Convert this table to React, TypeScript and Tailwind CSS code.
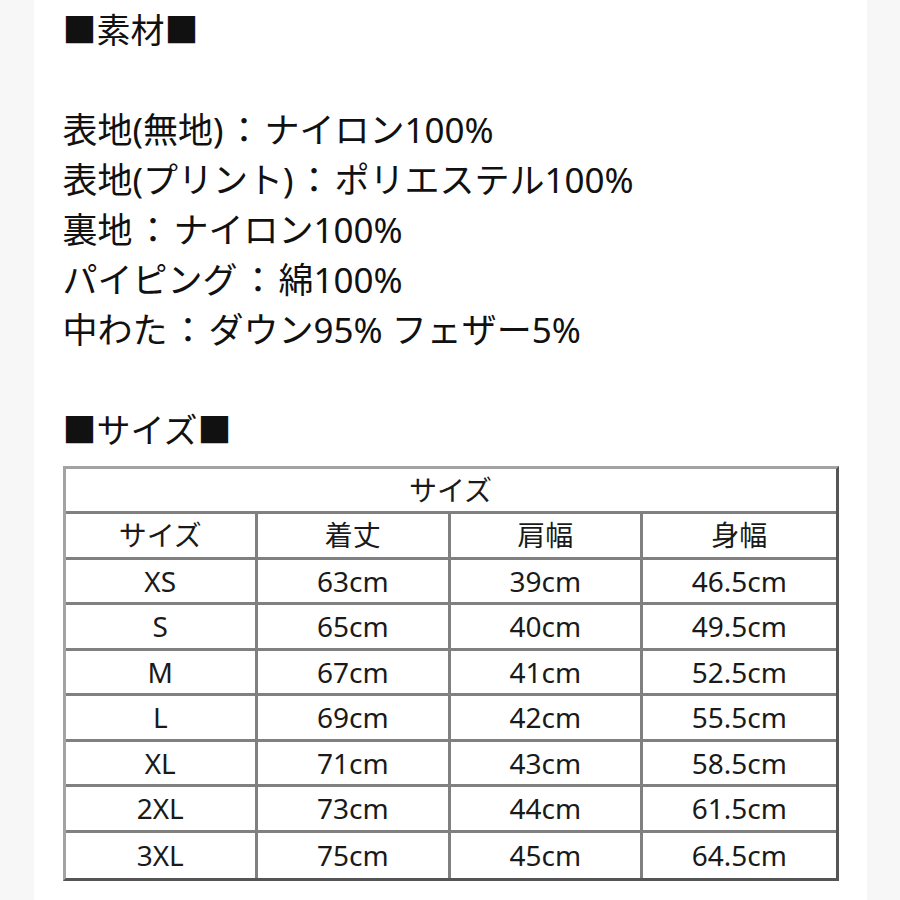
import React from "react";

const rows = [
  ["XS", "63cm", "39cm", "46.5cm"],
  ["S", "65cm", "40cm", "49.5cm"],
  ["M", "67cm", "41cm", "52.5cm"],
  ["L", "69cm", "42cm", "55.5cm"],
  ["XL", "71cm", "43cm", "58.5cm"],
  ["2XL", "73cm", "44cm", "61.5cm"],
  ["3XL", "75cm", "45cm", "64.5cm"],
];

const font = { fontFamily: '"Noto Sans", "Noto Sans CJK JP", sans-serif' };

function Row({ cells, last }: { cells: string[]; last: boolean }) {
  return (
    <div className={`grid grid-cols-4 h-[45.5px] ${last ? "" : "border-b-[3px] border-[#808080]"}`}>
      {cells.map((c, i) => (
        <div
          key={i}
          className={`flex items-center justify-center text-[28px] text-[#1a1a1a] ${i < 3 ? "border-r-[3px] border-[#808080]" : ""}`}
        >
          {c}
        </div>
      ))}
    </div>
  );
}

function Line({ label, value }: { label: string; value: string }) {
  return (
    <div className="text-[35px] leading-[50px] whitespace-nowrap">
      {label}
      <span className="mx-[3px]">：</span>
      {value}
    </div>
  );
}

export default function App() {
  const body: [string, string][] = [
    ["表地(無地)", "ナイロン100%"],
    ["表地(プリント)", "ポリエステル100%"],
    ["裏地", "ナイロン100%"],
    ["パイピング", "綿100%"],
    ["中わた", "ダウン95% フェザー5%"],
  ];
  return (
    <div className="w-[900px] h-[900px] bg-[#f7f7f7] flex justify-center overflow-hidden" style={font}>
      <div className="w-[833px] h-full bg-white pt-[5px] pl-[29px] text-[#111]">
        <div className="text-[34px] leading-[50px]">■素材■</div>
        <div className="h-[50px]" />
        {body.map(([l, v]) => (
          <Line key={l} label={l} value={v} />
        ))}
        <div className="h-[50px]" />
        <div className="text-[34px] leading-[50px]">■サイズ■</div>
        <div className="mt-[11px] w-[776px] border-[3px] border-t-[#a3a3a3] border-l-[#a3a3a3] border-r-[#555] border-b-[#555]">
          <div className="h-[45px] border-b-[3px] border-[#808080] flex items-center justify-center text-[28px] text-[#1a1a1a]">
            サイズ
          </div>
          <Row cells={["サイズ", "着丈", "肩幅", "身幅"]} last={false} />
          {rows.map((r, i) => (
            <Row key={r[0]} cells={r} last={i === rows.length - 1} />
          ))}
        </div>
      </div>
    </div>
  );
}
